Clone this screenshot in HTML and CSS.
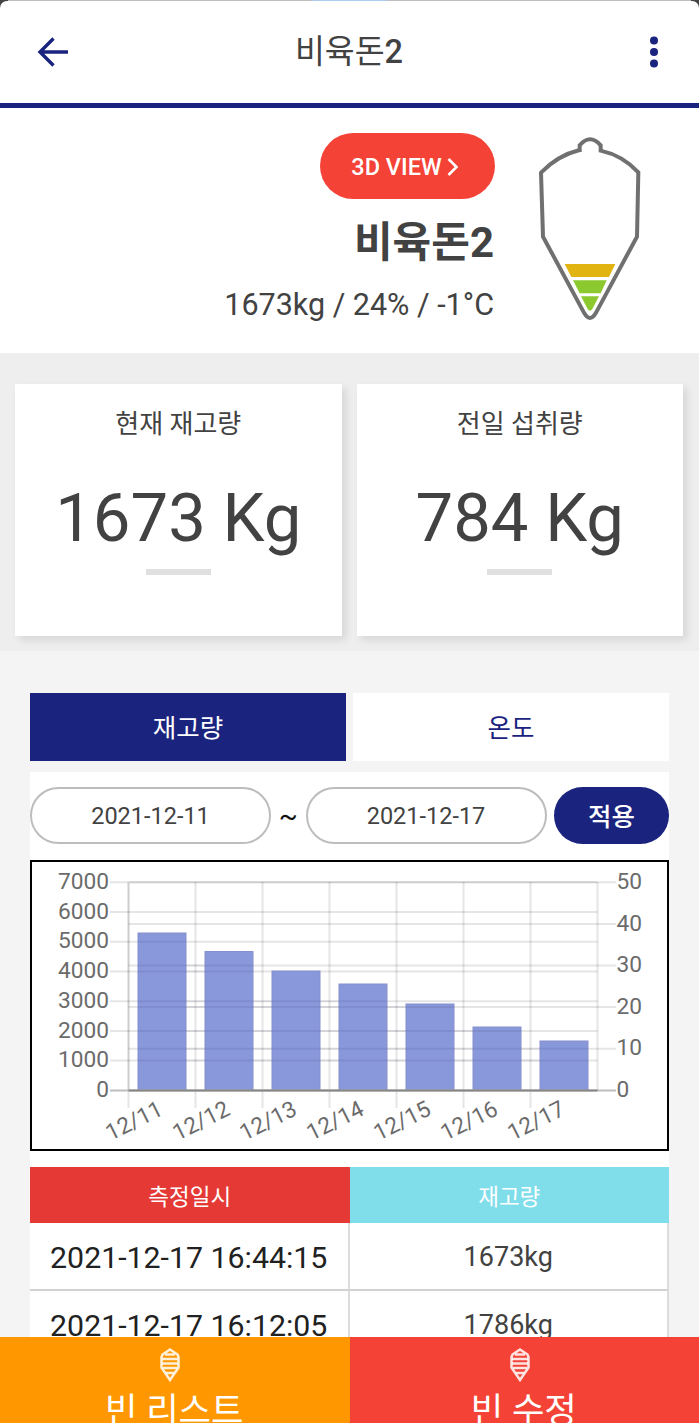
FILE: index.html
```html
<!DOCTYPE html>
<html lang="ko">

<head>
    <meta charset="UTF-8">
    <meta name="viewport" content="width=device-width, initial-scale=1.0">
    <title>비육돈2</title>
    <link rel="stylesheet" href="styles.css">
</head>

<body>
    <div class="header-wrap">
        <header class="header">
            <button class="icon-btn" aria-label="back">
                <svg width="32" height="32" viewBox="0 0 32 32" fill="none" stroke="#1a237e" stroke-width="3.4">
                    <path d="M31 16H4M16.500 2.500L3 16l13.500 13.500" />
                </svg>
            </button>
            <h1 class="header-title">비육돈<span class="num">2</span></h1>
            <button class="icon-btn icon-more" aria-label="menu">
                <svg width="10" height="32" viewBox="0 0 10 32" fill="#1a237e">
                    <circle cx="5" cy="4.500" r="4" />
                    <circle cx="5" cy="16" r="4" />
                    <circle cx="5" cy="27.500" r="4" />
                </svg>
            </button>
        </header>
    </div>

    <section class="summary">
        <div class="summary-info">
            <button class="view-btn">3D VIEW
                <svg width="12" height="20" viewBox="0 0 12 20" fill="none" stroke="#fff" stroke-width="2.6">
                    <path d="M1.500 2l8 8-8 8" />
                </svg>
            </button>
            <h2 class="bin-name">비육돈2</h2>
            <p class="bin-status">1673kg / 24% / -1°C</p>
        </div>
        <svg class="bin" viewBox="50 45 318 561">
            <path class="bin-outline" d="M178 96V76Q209 40 241 76V92Q306 106 354 157L350 350L226 580Q209 608 192 580L68 350L62 158Q112 106 178 90" />
            <path fill="#e1b412" d="M133 432H285L266 471H153z" />
            <path fill="#8bc92e" d="M158 481H259L241 520H178z" />
            <path fill="#8bc92e" d="M182 529H236L216 567Q209 577 202 567z" />
        </svg>
    </section>

    <section class="cards">
        <div class="card">
            <h3 class="card-label">현재 재고량</h3>
            <p class="card-value">1673 Kg</p>
            <span class="card-line"></span>
        </div>
        <div class="card">
            <h3 class="card-label">전일 섭취량</h3>
            <p class="card-value">784 Kg</p>
            <span class="card-line"></span>
        </div>
    </section>

    <main class="content">
        <div class="tabs">
            <button class="tab active">재고량</button>
            <button class="tab">온도</button>
        </div>

        <div class="panel">
            <form class="period">
                <input type="text" class="date-input" value="2021-12-11" readonly>
                <span class="tilde">~</span>
                <input type="text" class="date-input" value="2021-12-17" readonly>
                <button type="button" class="apply-btn">적용</button>
            </form>

            <div class="chart">
                <svg width="635" height="287" viewBox="0 0 635 287">
                    <!-- stock grid -->
                    <path class="grid" d="M78 50H565.500M78 79.700H565.500M78 109.400H565.500M78 139.200H565.500M78 168.900H565.500M78 198.600H565.500" />
                    <!-- temperature grid -->
                    <path class="grid" d="M96.500 61.900H584M96.500 103.500H584M96.500 145.100H584M96.500 186.700H584" />
                    <path class="grid" d="M163.500 20V246M230.500 20V246M297.500 20V246M364.500 20V246M431.500 20V246M498.500 20V246M565.500 20V229M96.500 229V246" />
                    <path class="grid axis" d="M96.500 20V229M96.500 20.300H565.500" />
                    <path class="grid" d="M78 20.300H96M566 20.300H584" />

                    <g class="bars">
                        <rect x="106" y="71" width="48" height="157" />
                        <rect x="173" y="89.500" width="48" height="138.500" />
                        <rect x="240" y="109" width="48" height="119" />
                        <rect x="307" y="122" width="48" height="106" />
                        <rect x="374" y="142" width="48" height="86" />
                        <rect x="441" y="165" width="48" height="63" />
                        <rect x="508" y="179" width="48" height="49" />
                    </g>
                    <path class="grid over" d="M106 79.700H154M106 103.500H221M106 109.400H221M106 139.200H355M106 145.100H422M106 168.900H489M106 186.700H556M106 198.600H556" />
                    <path class="base-tick" d="M78 228.500H584" />
                    <path class="base" d="M96.500 228.500H565.500" />

                    <g class="ticks" text-anchor="end">
                        <text x="77" y="27">7000</text>
                        <text x="77" y="56.700">6000</text>
                        <text x="77" y="86.400">5000</text>
                        <text x="77" y="116.100">4000</text>
                        <text x="77" y="145.900">3000</text>
                        <text x="77" y="175.600">2000</text>
                        <text x="77" y="205.300">1000</text>
                        <text x="77" y="234.500">0</text>
                    </g>
                    <g class="ticks">
                        <text x="584.500" y="27">50</text>
                        <text x="584.500" y="68.500">40</text>
                        <text x="584.500" y="110">30</text>
                        <text x="584.500" y="151.500">20</text>
                        <text x="584.500" y="193">10</text>
                        <text x="584.500" y="234.500">0</text>
                    </g>
                    <g class="ticks" text-anchor="end">
                        <text transform="translate(132.500 252) rotate(-26.500)">12/11</text>
                        <text transform="translate(199.500 252) rotate(-26.500)">12/12</text>
                        <text transform="translate(266.500 252) rotate(-26.500)">12/13</text>
                        <text transform="translate(333.500 252) rotate(-26.500)">12/14</text>
                        <text transform="translate(400.500 252) rotate(-26.500)">12/15</text>
                        <text transform="translate(467.500 252) rotate(-26.500)">12/16</text>
                        <text transform="translate(534.500 252) rotate(-26.500)">12/17</text>
                    </g>
                </svg>
            </div>

            <table class="history">
                <thead>
                    <tr>
                        <th class="th-date">측정일시</th>
                        <th class="th-stock">재고량</th>
                    </tr>
                </thead>
                <tbody>
                    <tr>
                        <td class="td-date">2021-12-17 16:44:15</td>
                        <td>1673kg</td>
                    </tr>
                    <tr>
                        <td class="td-date">2021-12-17 16:12:05</td>
                        <td>1786kg</td>
                    </tr>
                </tbody>
            </table>
        </div>
    </main>

    <nav class="bottom-nav">
        <a class="nav-item nav-list">
            <svg class="nav-icon" viewBox="0 0 20 34">
                <path d="M10 1.500L17.500 6.500 18.500 9V19.500L10 32 1.500 19.500V9L2.500 6.500z" />
                <path d="M5 6.500H15M2 11H18M2 15.500H18M3 20H17M6 25H14" />
            </svg>
            <span>빈 리스트</span>
        </a>
        <a class="nav-item nav-edit">
            <svg class="nav-icon" viewBox="0 0 20 34">
                <path d="M10 1.500L17.500 6.500 18.500 9V19.500L10 32 1.500 19.500V9L2.500 6.500z" />
                <path d="M5 6.500H15M2 11H18M2 15.500H18M3 20H17M6 25H14" />
            </svg>
            <span>빈 수정</span>
        </a>
    </nav>
</body>

</html>
```

FILE: styles.css
```css
:root {
    --navy: #1a237e;
    --red: #f44336;
    --text-color: #424242;
    --grid-color: rgba(0, 0, 0, 0.1);
}

* {
    box-sizing: border-box;
    margin: 0;
    padding: 0;
}

body {
    font-family: Roboto, "Noto Sans CJK KR", sans-serif;
    background-color: #f4f4f4;
    color: var(--text-color);
    height: 100vh;
    overflow: hidden;
    display: flex;
    flex-direction: column;
}

button {
    border: none;
    font-family: inherit;
    cursor: pointer;
}

/* Header */
.header-wrap {
    flex: none;
    padding-top: 1px;
    background: linear-gradient(to right, #bdbdbd 44%, #a9cdf0 45%, #a9cdf0 55%, #bdbdbd 56%) 8px 0 / calc(100% - 16px) 1px no-repeat #444;
}

.header {
    display: flex;
    align-items: center;
    justify-content: space-between;
    height: 107px;
    padding: 1px 40px 2px 37px;
    background: #fff;
    border-bottom: 5px solid var(--navy);
    border-radius: 7px 7px 0 0;
}

.icon-btn {
    display: flex;
    width: 32px;
    background: none;
}

.icon-more {
    justify-content: flex-end;
}

.header-title {
    padding-left: 2px;
    font-size: 32.5px;
    font-weight: 400;
    line-height: 48px;
}

.header-title .num {
    font-weight: 500;
}

/* Summary */
.summary {
    flex: none;
    display: flex;
    justify-content: flex-end;
    height: 245px;
    padding: 25px 56px 0 0;
    background: #fff;
}

.summary-info {
    display: flex;
    flex-direction: column;
    align-items: flex-end;
    margin-right: 42px;
}

.view-btn {
    display: flex;
    align-items: center;
    justify-content: center;
    gap: 5px;
    width: 175px;
    height: 66px;
    padding: 1px 5px 0 0;
    border-radius: 33px;
    background: var(--red);
    color: #fff;
    font-size: 23.5px;
    font-weight: 500;
}

.bin-name {
    margin: 14px 1px 0 0;
    font-size: 42px;
    font-weight: 700;
    line-height: 60px;
}

.bin-status {
    margin: 12px 1px 0 0;
    font-size: 30.5px;
    line-height: 40px;
}

.bin {
    width: 106px;
    height: 187px;
    margin-top: 2px;
}

.bin-outline {
    fill: none;
    stroke: #707070;
    stroke-width: 12;
}

/* Cards */
.cards {
    flex: none;
    display: flex;
    gap: 15px;
    height: 298px;
    padding: 31px 16px 15px 15px;
    background: #eee;
}

.card {
    flex: 1;
    display: flex;
    flex-direction: column;
    align-items: center;
    padding-top: 21px;
    background: #fff;
    box-shadow: 4px 4px 8px rgba(0, 0, 0, 0.1);
}

.card-label {
    font-size: 26px;
    font-weight: 400;
    line-height: 38px;
}

.card-value {
    margin-top: 36px;
    font-size: 67px;
    line-height: 78px;
}

.card-line {
    width: 65px;
    height: 6px;
    margin-top: 12px;
    background: #e0e0e0;
}

/* Content */
.content {
    flex: 1;
    min-height: 0;
    overflow: hidden;
    padding: 41.5px 30px 0;
}

.tabs {
    display: flex;
    gap: 7px;
    height: 68.5px;
    margin-bottom: 11px;
}

.tab {
    flex: 1;
    padding-bottom: 3px;
    background: #fff;
    color: var(--navy);
    font-size: 25.5px;
}

.tab.active {
    background: var(--navy);
    color: #fff;
}

.panel {
    background: #fff;
    padding-top: 15px;
}

.period {
    display: flex;
    align-items: center;
    height: 57px;
}

.date-input {
    width: 241px;
    height: 57px;
    border: 2px solid #bdbdbd;
    border-radius: 29px;
    background: #fff;
    color: var(--text-color);
    font-family: inherit;
    font-size: 23.5px;
    text-align: center;
}

.tilde {
    width: 34.5px;
    color: #111;
    font-size: 28px;
    text-align: center;
}

.apply-btn {
    width: 115px;
    height: 57px;
    margin-left: auto;
    padding-bottom: 3px;
    border-radius: 29px;
    background: var(--navy);
    color: #fff;
    font-size: 25.5px;
    font-weight: 500;
}

/* Chart */
.chart {
    height: 291px;
    margin-top: 16px;
    border: 2px solid #000;
}

.chart svg {
    display: block;
}

.grid {
    fill: none;
    stroke: var(--grid-color);
    stroke-width: 2;
}

.axis {
    stroke: rgba(0, 0, 0, 0.2);
}

.over {
    stroke: rgba(0, 0, 60, 0.07);
}

.base-tick {
    stroke: #bdbdbd;
    stroke-width: 2;
}

.base {
    stroke: #858585;
    stroke-width: 2;
}

.bars {
    fill: #8998da;
    stroke: #8690cc;
    stroke-width: 1;
}

.ticks {
    fill: #6b6b6b;
    font-size: 22.7px;
}

/* History table */
.history {
    width: 100%;
    margin-top: 16px;
    border-collapse: separate;
    border-spacing: 0;
    table-layout: fixed;
    text-align: center;
}

.history th {
    height: 56px;
    color: #fff;
    font-size: 22.5px;
    font-weight: 400;
}

.history .th-date {
    background: #e53935;
}

.history .th-stock {
    background: #80deea;
}

.history td {
    height: 68px;
    padding-top: 2px;
    border-right: 2px solid #dcdcdc;
    border-bottom: 2px solid #d2d2d2;
    font-size: 27px;
}

.history .td-date {
    color: #212121;
    font-size: 30.3px;
}

/* Bottom navigation */
.bottom-nav {
    flex: none;
    display: flex;
    height: 86px;
    overflow: hidden;
}

.nav-item {
    flex: 1;
    display: flex;
    flex-direction: column;
    align-items: center;
    padding: 11px 9px 0 0;
    color: #fff;
    font-size: 35.3px;
    line-height: 52px;
}

.nav-item span {
    margin: 3px 0 0 8px;
    white-space: nowrap;
}

.nav-list {
    background: #ff9800;
}

.nav-edit {
    background: var(--red);
}

.nav-icon {
    flex: none;
    width: 20px;
    height: 34px;
    fill: none;
    stroke: rgba(255, 255, 255, 0.85);
    stroke-width: 2.5;
}
```
